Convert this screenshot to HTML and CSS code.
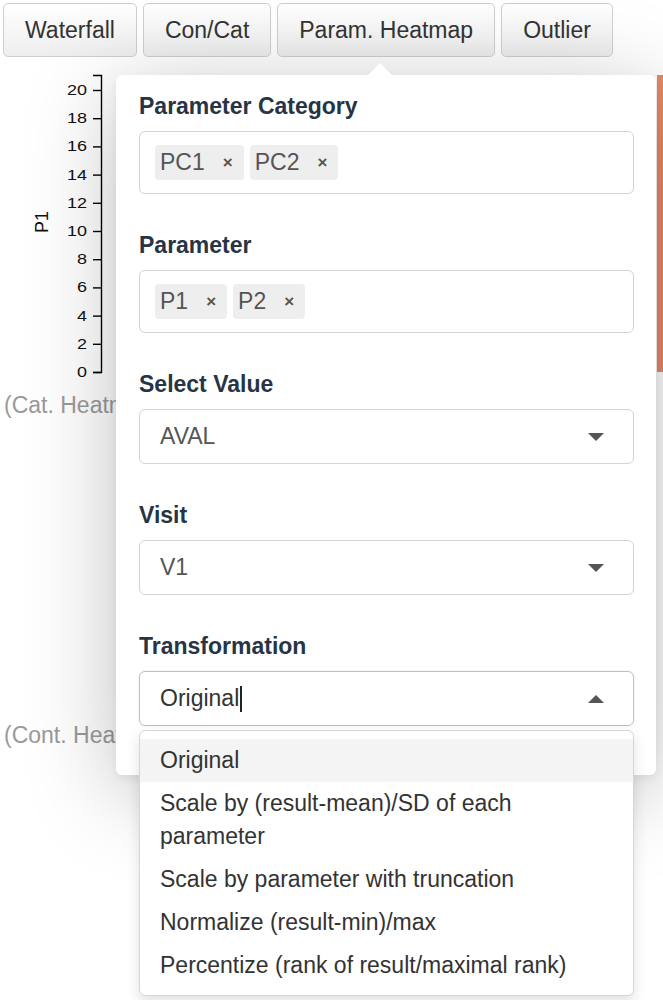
FILE: index.html
```html
<!DOCTYPE html>
<html>
<head>
<meta charset="utf-8">
<link rel="stylesheet" href="styles.css">
</head>
<body>
<div class="page">
  <div class="tabs">
    <button class="tab">Waterfall</button>
    <button class="tab">Con/Cat</button>
    <button class="tab">Param. Heatmap</button>
    <button class="tab tab-last">Outlier</button>
  </div>

  <div class="plot">
    <svg class="axis" width="110" height="310" viewBox="0 0 110 310">
      <path d="M93,5.5 H101.5 V302.5 H93" fill="none" stroke="#000" stroke-width="1.4"/>
      <g stroke="#000" stroke-width="1.4">
        <line x1="93" x2="101" y1="302.5" y2="302.5"/>
        <line x1="93" x2="101" y1="274.3" y2="274.3"/>
        <line x1="93" x2="101" y1="246.1" y2="246.1"/>
        <line x1="93" x2="101" y1="217.9" y2="217.9"/>
        <line x1="93" x2="101" y1="189.7" y2="189.7"/>
        <line x1="93" x2="101" y1="161.5" y2="161.5"/>
        <line x1="93" x2="101" y1="133.3" y2="133.3"/>
        <line x1="93" x2="101" y1="105.1" y2="105.1"/>
        <line x1="93" x2="101" y1="76.9" y2="76.9"/>
        <line x1="93" x2="101" y1="48.7" y2="48.7"/>
        <line x1="93" x2="101" y1="20.5" y2="20.5"/>
      </g>
      <g class="ticks" text-anchor="end">
        <text x="87" y="307" textLength="10" lengthAdjust="spacingAndGlyphs">0</text>
        <text x="87" y="279" textLength="10" lengthAdjust="spacingAndGlyphs">2</text>
        <text x="87" y="251" textLength="10" lengthAdjust="spacingAndGlyphs">4</text>
        <text x="87" y="222" textLength="10" lengthAdjust="spacingAndGlyphs">6</text>
        <text x="87" y="194" textLength="10" lengthAdjust="spacingAndGlyphs">8</text>
        <text x="87" y="166" textLength="20" lengthAdjust="spacingAndGlyphs">10</text>
        <text x="87" y="138" textLength="20" lengthAdjust="spacingAndGlyphs">12</text>
        <text x="87" y="110" textLength="20" lengthAdjust="spacingAndGlyphs">14</text>
        <text x="87" y="81" textLength="20" lengthAdjust="spacingAndGlyphs">16</text>
        <text x="87" y="53" textLength="20" lengthAdjust="spacingAndGlyphs">18</text>
        <text x="87" y="25" textLength="20" lengthAdjust="spacingAndGlyphs">20</text>
      </g>
      <text class="ylab" transform="translate(48,152) rotate(-90)" text-anchor="middle">P1</text>
    </svg>
    <div class="heat-col"></div>
  </div>

  <div class="muted cat">(Cat. Heatmap)</div>
  <div class="muted cont">(Cont. Heatmap)</div>

  <div class="popover">
    <div class="group">
      <div class="label">Parameter Category</div>
      <div class="multi">
        <span class="tag">PC1<span class="x">×</span></span>
        <span class="tag">PC2<span class="x">×</span></span>
      </div>
    </div>
    <div class="group">
      <div class="label">Parameter</div>
      <div class="multi">
        <span class="tag">P1<span class="x">×</span></span>
        <span class="tag">P2<span class="x">×</span></span>
      </div>
    </div>
    <div class="group">
      <div class="label">Select Value</div>
      <div class="select"><span class="val">AVAL</span><span class="caret"></span></div>
    </div>
    <div class="group">
      <div class="label">Visit</div>
      <div class="select"><span class="val">V1</span><span class="caret"></span></div>
    </div>
    <div class="group group-last">
      <div class="label">Transformation</div>
      <div class="select focus"><span class="val val-dark">Original<span class="cursor"></span></span><span class="caret caret-up"></span></div>
      <div class="dropdown">
        <div class="opt active">Original</div>
        <div class="opt">Scale by (result-mean)/SD of each parameter</div>
        <div class="opt">Scale by parameter with truncation</div>
        <div class="opt">Normalize (result-min)/max</div>
        <div class="opt">Percentize (rank of result/maximal rank)</div>
      </div>
    </div>
  </div>
</div>
</body>
</html>
```

FILE: styles.css
```css
html, body {
  margin: 0;
  padding: 0;
  background: #fff;
}

body {
  font-family: "Liberation Sans", Arial, sans-serif;
  font-size: 23px;
  color: #333;
  overflow: hidden;
  height: 1000px;
}

.page {
  position: relative;
  width: 663px;
  height: 1000px;
}

.tabs {
  display: flex;
  gap: 6px;
  padding: 3px 3px 0 3px;
}

.tab {
  height: 54px;
  padding: 0 21px;
  font-family: "Liberation Sans", Arial, sans-serif;
  font-size: 23px;
  color: #333;
  background: linear-gradient(#ffffff, #eeeeee);
  border: 1px solid #cfcfcf;
  border-radius: 5px;
}

.plot {
  display: flex;
  margin-top: 13px;
  height: 310px;
}

.axis {
  display: block;
}

.ticks text {
  font-family: "Liberation Sans", Arial, sans-serif;
  font-size: 14px;
  fill: #111;
}

.ylab {
  font-family: "Liberation Sans", Arial, sans-serif;
  font-size: 18px;
  fill: #111;
}

.heat-col {
  margin-left: auto;
  margin-top: 5px;
  width: 6px;
  height: 297px;
  background: #e98c68;
}

.muted {
  color: #9a9a9a;
  font-size: 23px;
  line-height: 30px;
  padding-left: 4px;
  white-space: nowrap;
}

.cat {
  margin-top: 10px;
}

.cont {
  margin-top: 300px;
}

.popover {
  position: absolute;
  left: 116px;
  top: 75px;
  width: 540px;
  height: 700px;
  box-sizing: border-box;
  padding: 16px 22px 0 23px;
  background: #fff;
  border-radius: 6px;
  box-shadow: 0 16px 90px rgba(0, 0, 0, 0.25), 0 4px 10px rgba(0, 0, 0, 0.06);
}

.popover::before {
  content: "";
  position: absolute;
  left: 252px;
  top: -12px;
  border-left: 12px solid transparent;
  border-right: 12px solid transparent;
  border-bottom: 12px solid #fff;
}

.group {
  position: relative;
  margin-bottom: 36px;
}

.label {
  font-weight: bold;
  font-size: 23px;
  line-height: 30px;
  color: #263445;
  margin-bottom: 10px;
}

.multi {
  display: flex;
  align-items: center;
  gap: 6px;
  height: 63px;
  box-sizing: border-box;
  padding: 0 15px;
  border: 1px solid #d3d3d3;
  border-radius: 6px;
}

.tag {
  display: flex;
  align-items: center;
  height: 35px;
  padding: 0 11px 0 5px;
  background: #eeeeee;
  border-radius: 4px;
  color: #555;
  font-size: 23px;
}

.tag .x {
  margin-left: 18px;
  font-size: 17px;
  font-weight: bold;
  color: #555;
}

.select {
  display: flex;
  align-items: center;
  justify-content: space-between;
  height: 55px;
  box-sizing: border-box;
  padding: 0 29px 0 20px;
  border: 1px solid #d3d3d3;
  border-radius: 6px;
}

.select.focus {
  border-color: #b3c2d8;
  box-shadow: 0 0 2px rgba(120, 150, 200, 0.25);
}

.val {
  color: #555;
  display: flex;
  align-items: center;
}

.val-dark {
  color: #333;
}

.cursor {
  display: inline-block;
  width: 1.5px;
  height: 26px;
  background: #222;
  margin-left: 1px;
}

.caret {
  width: 0;
  height: 0;
  border-left: 8px solid transparent;
  border-right: 8px solid transparent;
  border-top: 8px solid #555;
}

.caret-up {
  border-top: none;
  border-bottom: 8px solid #555;
}

.dropdown {
  position: absolute;
  left: 0;
  right: 0;
  top: calc(100% + 4px);
  background: #fff;
  border: 1px solid #d6d6d6;
  border-radius: 6px;
  padding: 8px 0 8px 0;
  box-shadow: 0 6px 14px rgba(0, 0, 0, 0.12);
}

.opt {
  padding: 5px 40px 5px 20px;
  line-height: 33px;
  color: #333;
  font-size: 23px;
}

.opt.active {
  background: #f4f4f4;
}
```
